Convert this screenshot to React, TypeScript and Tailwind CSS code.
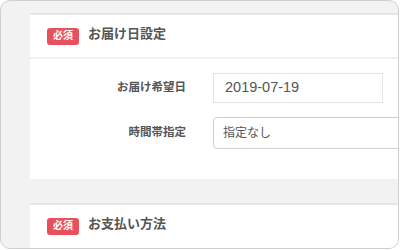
import React from "react";

const font = { fontFamily: '"Liberation Sans", "Noto Sans CJK JP", sans-serif' };

function Badge() {
  return (
    <span className="flex h-[17px] w-[32px] shrink-0 items-center justify-center rounded-[3px] bg-[#e9505e] text-[10px] font-bold leading-none text-white">
      必須
    </span>
  );
}

function Header({ title }: { title: string }) {
  return (
    <div className="flex h-[42px] items-center gap-[9px] pl-[17px]">
      <Badge />
      <span className="-mt-[4px] text-[13px] font-bold text-[#555]">{title}</span>
    </div>
  );
}

export default function App() {
  return (
    <div className="h-[250px] w-[400px] bg-white" style={font}>
      <div className="flex h-[249px] w-[399px] flex-col overflow-hidden rounded-[10px] border border-[#cfcfcf] bg-[#f2f2f2] pl-[29px] pt-[12px]">
        <div className="h-[166px] shrink-0 border-t-2 border-[#e3e7ec] bg-white">
          <Header title="お届け日設定" />
          <div className="border-t-2 border-[#f1f1f1]" />
          <div className="flex flex-col gap-[14px] pt-[14px]">
            <div className="flex items-center">
              <div className="w-[156px] shrink-0 text-right text-[11.5px] font-bold text-[#555]">お届け希望日</div>
              <div className="ml-[27px] flex h-[30px] w-[170px] shrink-0 items-center border border-[#e3e3e3] pl-[11px] text-[14.5px] text-[#555]">
                2019-07-19
              </div>
            </div>
            <div className="flex items-center">
              <div className="w-[156px] shrink-0 text-right text-[11.5px] font-bold text-[#555]">時間帯指定</div>
              <div className="ml-[27px] flex h-[32px] w-[220px] shrink-0 items-center rounded-[4px] border border-[#cfcfcf] pl-[9px] text-[12px] text-[#555]">
                指定なし
              </div>
            </div>
          </div>
        </div>
        <div className="mt-[24px] flex-1 border-t-2 border-[#e3e7ec] bg-white">
          <Header title="お支払い方法" />
        </div>
      </div>
    </div>
  );
}
